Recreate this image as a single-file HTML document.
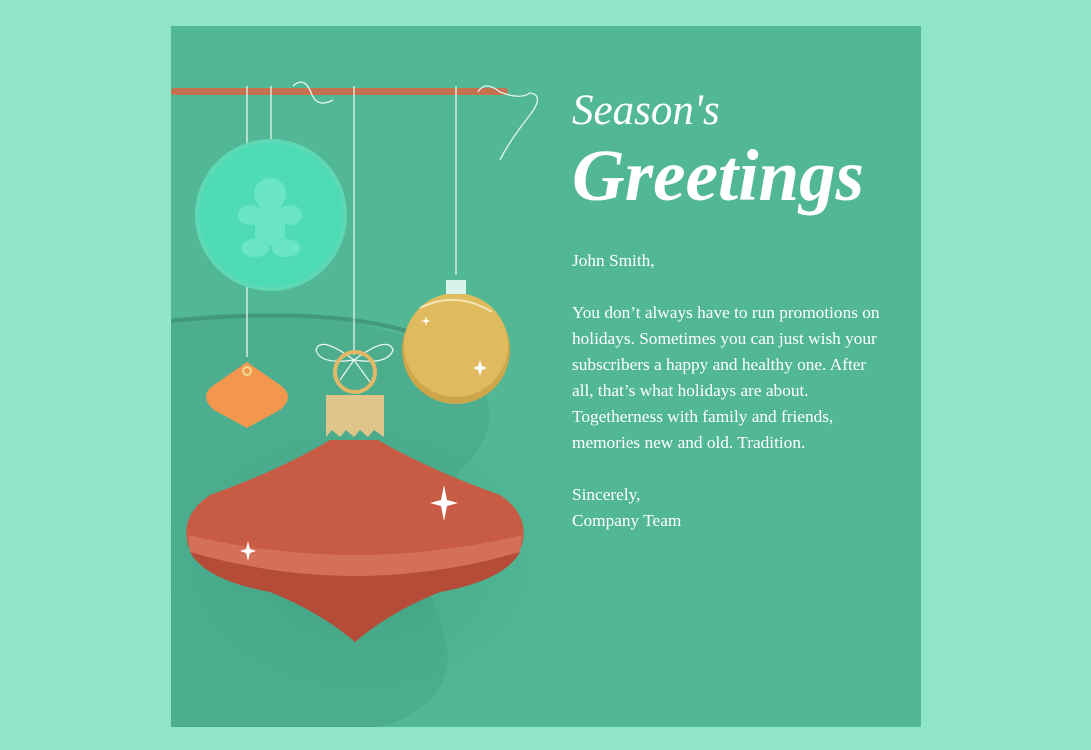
<!DOCTYPE html>
<html><head><style>
body{margin:0;width:1091px;height:750px;background:#8fe4c9;position:relative;overflow:hidden;font-family:"Liberation Serif",serif}
.card{position:absolute;left:171px;top:26px;width:750px;height:701px;background:#51b795;overflow:hidden}
svg{position:absolute;left:0;top:0}
.t{position:absolute;left:401px;color:#fff;white-space:nowrap}
.s{top:60px;font-size:43px;font-style:italic}
.g{top:108px;font-size:73px;font-style:italic;font-weight:bold}
.b{top:222px;font-size:17.3px;line-height:26px}
</style></head><body>
<div class="card">
<svg width="750" height="701" viewBox="171 26 750 701">
<defs><radialGradient id="sh" cx="0.5" cy="0.5" r="0.5"><stop offset="0" stop-color="#3a9a7a" stop-opacity=".5"/><stop offset="1" stop-color="#3a9a7a" stop-opacity="0"/></radialGradient></defs>
<path d="M171 318 Q330 300 440 350 Q520 400 470 460 Q400 530 440 620 Q470 700 380 727 L171 727Z" fill="#49a98a" opacity=".6"/>
<path d="M171 321 Q330 305 420 335" stroke="#42987b" stroke-width="4" fill="none"/>
<ellipse cx="360" cy="560" rx="200" ry="150" fill="url(#sh)"/>
<rect x="171" y="88" width="337" height="7" rx="3" fill="#c4714f"/>
<g stroke="#e6f5ef" stroke-width="1.3" fill="none">
<path d="M247 86V357"/><path d="M271 86V165"/><path d="M354 86V355"/><path d="M456 86V275"/>
<path d="M293 86 Q305 75 312 95 Q318 108 333 100"/>
<path d="M478 92 Q485 80 500 92 Q520 100 530 93 Q545 95 530 115 Q510 140 500 160"/>
<path d="M271 160 Q255 148 250 158 Q255 168 271 160 Q287 148 292 158 Q287 168 271 160"/>
<path d="M354 360 Q320 335 316 350 Q320 365 354 360 Q388 335 393 350 Q388 365 354 360 M354 360 L340 380 M354 360 L370 382"/>
</g>
<circle cx="271" cy="215" r="76" fill="#5fd9b5"/>
<circle cx="271" cy="215" r="72" fill="#4fdbb6"/>
<g fill="#6ae6c6"><circle cx="270" cy="194" r="16"/><rect x="255" y="205" width="30" height="40" rx="10"/><ellipse cx="250" cy="215" rx="12" ry="10"/><ellipse cx="290" cy="215" rx="12" ry="10"/><ellipse cx="255" cy="248" rx="14" ry="9"/><ellipse cx="286" cy="248" rx="14" ry="9"/></g>
<path d="M247 362 L280 385 Q296 396 280 410 L247 428 L214 410 Q198 396 214 385Z" fill="#f3964e"/>
<circle cx="247" cy="371" r="4" fill="#f3964e" stroke="#f0da90" stroke-width="2"/>
<circle cx="456" cy="350" r="54" fill="#cfa54a"/>
<circle cx="456" cy="345" r="52" fill="#e0bb5e"/>
<rect x="446" y="280" width="20" height="14" fill="#d9f3ea"/>
<path d="M420 308 Q456 290 492 312" stroke="#f5e6b8" stroke-width="2" fill="none"/>
<circle cx="355" cy="372" r="20" fill="none" stroke="#e2b866" stroke-width="4"/>
<path d="M326 395H384V437L374 430 368 437 360 430 354 437 346 430 340 437 332 430 326 437Z" fill="#dfc589"/>
<path d="M330 440 L378 440 Q430 470 500 495 Q530 515 522 545 Q510 575 440 590 Q390 610 355 642 Q320 610 270 590 Q200 575 188 545 Q180 515 210 495 Q280 470 330 440Z" fill="#c85b43"/>
<path d="M188 535 Q355 575 522 535 L520 552 Q355 600 190 552Z" fill="#d4705a"/>
<path d="M190 552 Q355 600 520 552 Q505 580 440 592 Q390 612 355 642 Q320 612 270 592 Q205 580 190 552Z" fill="#b54c38"/>
<g fill="#fff"><path d="M444 485 L447 500 L458 503 L447 506 L444 521 L441 506 L430 503 L441 500Z"/><path d="M248 541 L250 549 L256 551 L250 553 L248 561 L246 553 L240 551 L246 549Z"/><path d="M480 360 L482 366 L487 368 L482 370 L480 376 L478 370 L473 368 L478 366Z"/><path d="M426 316 L427 320 L431 321 L427 322 L426 326 L425 322 L421 321 L425 320Z"/></g>
</svg>
<div class="t s">Season's</div>
<div class="t g">Greetings</div>
<div class="t b">John Smith,<br><br>You don’t always have to run promotions on<br>holidays. Sometimes you can just wish your<br>subscribers a happy and healthy one. After<br>all, that’s what holidays are about.<br>Togetherness with family and friends,<br>memories new and old. Tradition.<br><br>Sincerely,<br>Company Team</div>
</div>
</body></html>
